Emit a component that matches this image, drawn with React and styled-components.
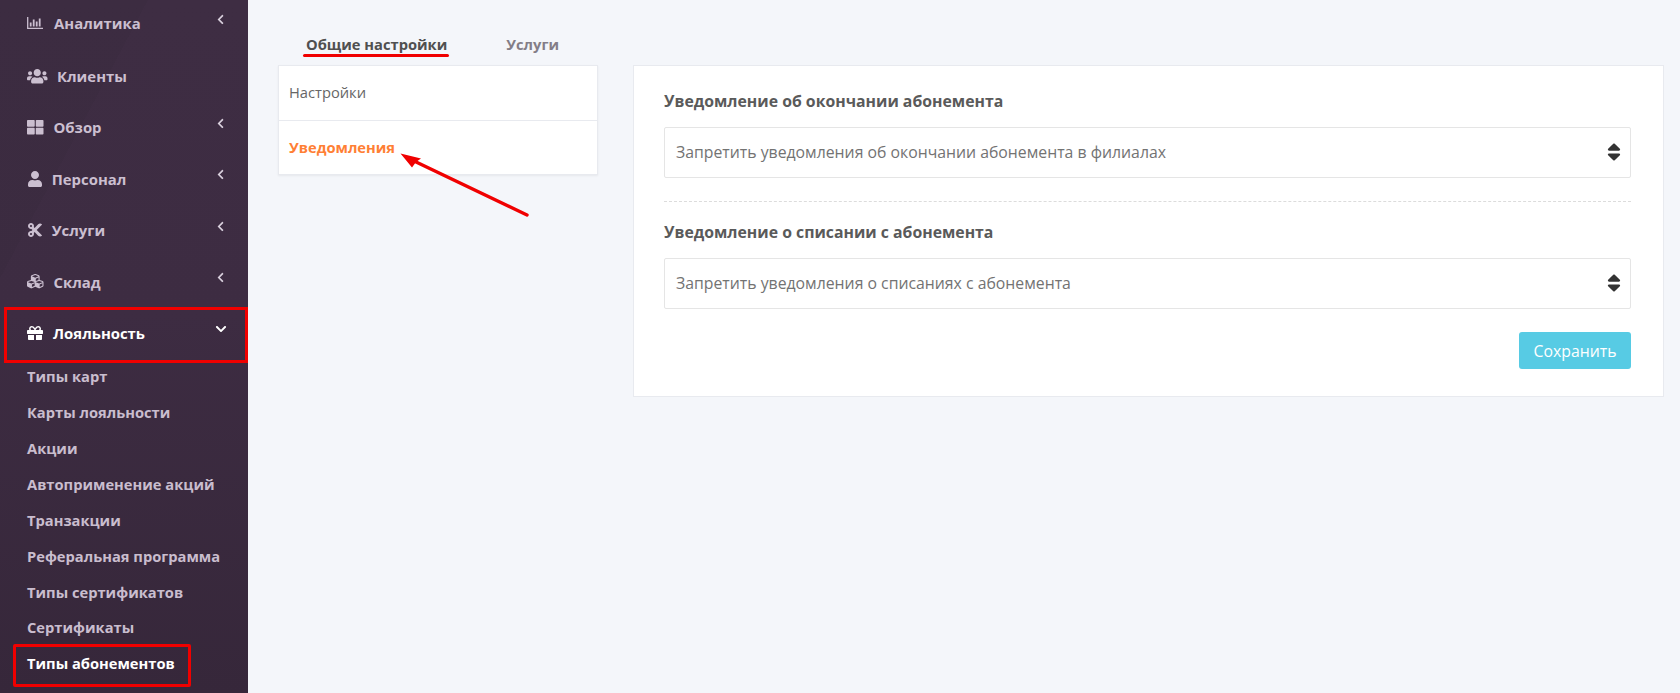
import React from "react";
import styled, { createGlobalStyle } from "styled-components";
import {
  FaUsers,
  FaThLarge,
  FaUser,
  FaCut,
  FaCubes,
  FaGift,
  FaChevronLeft,
  FaChevronDown,
  FaSort
} from "react-icons/fa";

const GlobalStyle = createGlobalStyle`
  html, body {
    margin: 0;
    padding: 0;
    height: 100%;
    background: #f4f6fa;
    font-family: "Open Sans", "Noto Sans", sans-serif;
  }
  *, *::before, *::after { box-sizing: border-box; }
`;

const Page = styled.div`
  display: flex;
  width: 1680px;
  height: 693px;
  overflow: hidden;
  background: #f4f6fa;
`;

const Sidebar = styled.aside`
  width: 248px;
  flex-shrink: 0;
  background:
    linear-gradient(118deg, rgba(0, 0, 0, 0.03) 0, rgba(0, 0, 0, 0.03) 24%, rgba(0, 0, 0, 0) 24%),
    linear-gradient(180deg, #3e2d43 0%, #3d2c42 45%, #36273a 100%);
`;

const Nav = styled.nav`
  margin-top: -4px;
`;

const NavItem = styled.div`
  position: relative;
  display: flex;
  align-items: center;
  height: 51.4px;
  padding: 0 22px 0 27px;
  font-size: 14.9px;
  font-weight: 700;
  color: ${(p) => (p.$open ? "#ffffff" : "#cbbfd0")};

  &:first-child {
    height: 54.4px;
  }

  ${(p) =>
    p.$marked &&
    `
    &::after {
      content: "";
      position: absolute;
      left: 4px;
      right: 0;
      top: 0;
      bottom: -4px;
      border: 3px solid #f00000;
    }
  `}
`;

const LeadIcon = styled.span`
  display: flex;
  flex-shrink: 0;
  margin-right: ${(p) => p.$gap}px;
  font-size: ${(p) => p.$size}px;
`;

const Chevron = styled.span`
  margin-left: auto;
  margin-right: ${(p) => (p.$open ? -1 : 0)}px;
  display: flex;
  font-size: ${(p) => (p.$open ? 12 : 11)}px;
  color: ${(p) => (p.$open ? "#ffffff" : "#d8cfdc")};
  transform: translateY(-4px);
`;

const SubItem = styled.div`
  position: relative;
  display: flex;
  align-items: center;
  height: 35.9px;
  padding: 0 0 1px 27px;
  font-size: 14.7px;
  font-weight: 700;
  color: ${(p) => (p.$active ? "#ffffff" : "#c9bdce")};

  ${(p) =>
    p.$active &&
    `
    &::after {
      content: "";
      position: absolute;
      left: 13px;
      top: -2px;
      width: 178px;
      height: 43px;
      border: 3px solid #f00000;
      border-radius: 2px;
    }
  `}
`;

const Main = styled.main`
  position: relative;
  flex: 1;
  padding-left: 30px;
`;

const Tabs = styled.div`
  display: flex;
  gap: 59px;
  height: 65px;
  padding: 33px 0 0 28px;
`;

const Tab = styled.div`
  position: relative;
  height: 22px;
  line-height: 22px;
  font-size: 14.7px;
  font-weight: 700;
  color: ${(p) => (p.$active ? "#505050" : "#837d87")};

  ${(p) =>
    p.$active &&
    `
    &::after {
      content: "";
      position: absolute;
      left: -3px;
      right: -2px;
      bottom: -2px;
      height: 3px;
      border-radius: 2px;
      background: #f00000;
    }
  `}
`;

const Columns = styled.div`
  display: grid;
  grid-template-columns: 320px 1031px;
  gap: 35px;
  align-items: start;
`;

const SideCard = styled.div`
  background: #ffffff;
  border: 1px solid #e8eaef;
  box-shadow: 0 1px 2px rgba(0, 0, 0, 0.06);
`;

const SideRow = styled.div`
  display: flex;
  align-items: center;
  height: 54px;
  padding: 0 0 2px 10px;
  font-size: 14.7px;
  font-weight: ${(p) => (p.$active ? 700 : 400)};
  color: ${(p) => (p.$active ? "#ff7f35" : "#666666")};

  & + & {
    border-top: 1px solid #e8eaef;
  }
`;

const FormCard = styled.section`
  height: 332px;
  padding: 24px 32px 0 30px;
  background: #ffffff;
  border: 1px solid #e8eaef;
`;

const Field = styled.div`
  ${(p) =>
    p.$divided &&
    `
    margin-top: 23px;
    padding-top: 19px;
    border-top: 1px dashed #dcdcdc;
  `}
`;

const Label = styled.div`
  height: 22px;
  line-height: 22px;
  margin-bottom: 15px;
  font-size: 15.8px;
  font-weight: 700;
  color: #5a5a5a;
`;

const SelectBox = styled.div`
  display: flex;
  align-items: center;
  justify-content: space-between;
  height: 51px;
  padding: 0 5px 2px 11px;
  background: #ffffff;
  border: 1px solid #e5e5e5;
  border-radius: 2px;
  font-size: 15.8px;
  color: #737373;

  svg {
    font-size: 22px;
    color: #333333;
  }
`;

const Actions = styled.div`
  display: flex;
  justify-content: flex-end;
  margin-top: 23px;
`;

const SaveButton = styled.button`
  width: 112px;
  height: 37px;
  padding: 0;
  border: none;
  border-radius: 3px;
  background: #57cbe4;
  color: #ffffff;
  font-family: inherit;
  font-size: 15.8px;
`;

const ArrowMark = styled.svg`
  position: absolute;
  left: 150px;
  top: 150px;
  width: 132px;
  height: 70px;
  pointer-events: none;
`;

// thin axis and bars, the solid fa chart icon is too heavy here
function ChartIcon() {
  return (
    <svg width="16" height="12" viewBox="0 0 16 12" fill="none" stroke="currentColor" strokeWidth="1.3">
      <path d="M0.7 0v11.3H16" />
      <path d="M3.7 9.5V5.5M6.7 9.5V2.5M9.7 9.5V4.5M12.7 9.5V1.5" strokeWidth="1.8" />
    </svg>
  );
}

const topItems = [
  { label: "Аналитика", icon: ChartIcon, size: 16, chevron: true, gap: 11 },
  { label: "Клиенты", icon: FaUsers, size: 20.5, gap: 9.5 },
  { label: "Обзор", icon: FaThLarge, size: 16.5, chevron: true, gap: 10 },
  { label: "Персонал", icon: FaUser, size: 16, chevron: true, gap: 8.7 },
  { label: "Услуги", icon: FaCut, size: 16, chevron: true, gap: 8.7 },
  { label: "Склад", icon: FaCubes, size: 16.5, chevron: true, gap: 10 }
];

const subItems = [
  "Типы карт",
  "Карты лояльности",
  "Акции",
  "Автоприменение акций",
  "Транзакции",
  "Реферальная программа",
  "Типы сертификатов",
  "Сертификаты"
];

export default function App() {
  return (
    <Page>
      <GlobalStyle />
      <Sidebar>
        <Nav>
          {topItems.map((item) => {
            const Icon = item.icon;
            return (
              <NavItem key={item.label}>
                <LeadIcon $size={item.size} $gap={item.gap}>
                  <Icon />
                </LeadIcon>
                {item.label}
                {item.chevron && (
                  <Chevron>
                    <FaChevronLeft />
                  </Chevron>
                )}
              </NavItem>
            );
          })}
          <NavItem $open $marked>
            <LeadIcon $size={16} $gap={10}>
              <FaGift />
            </LeadIcon>
            Лояльность
            <Chevron $open>
              <FaChevronDown />
            </Chevron>
          </NavItem>
          {subItems.map((label) => (
            <SubItem key={label}>{label}</SubItem>
          ))}
          <SubItem $active>Типы абонементов</SubItem>
        </Nav>
      </Sidebar>
      <Main>
        <Tabs>
          <Tab $active>Общие настройки</Tab>
          <Tab>Услуги</Tab>
        </Tabs>
        <Columns>
          <SideCard>
            <SideRow>Настройки</SideRow>
            <SideRow $active>Уведомления</SideRow>
          </SideCard>
          <FormCard>
            <Field>
              <Label>Уведомление об окончании абонемента</Label>
              <SelectBox>
                Запретить уведомления об окончании абонемента в филиалах
                <FaSort />
              </SelectBox>
            </Field>
            <Field $divided>
              <Label>Уведомление о списании с абонемента</Label>
              <SelectBox>
                Запретить уведомления о списаниях с абонемента
                <FaSort />
              </SelectBox>
            </Field>
            <Actions>
              <SaveButton>Сохранить</SaveButton>
            </Actions>
          </FormCard>
        </Columns>
        <ArrowMark viewBox="0 0 132 70">
          <line x1="129" y1="65" x2="16" y2="11" stroke="#f00000" strokeWidth="3.4" strokeLinecap="round" />
          <polygon points="2.5,3.5 23,8.5 18,12 14,17.5" fill="#f00000" />
        </ArrowMark>
      </Main>
    </Page>
  );
}
